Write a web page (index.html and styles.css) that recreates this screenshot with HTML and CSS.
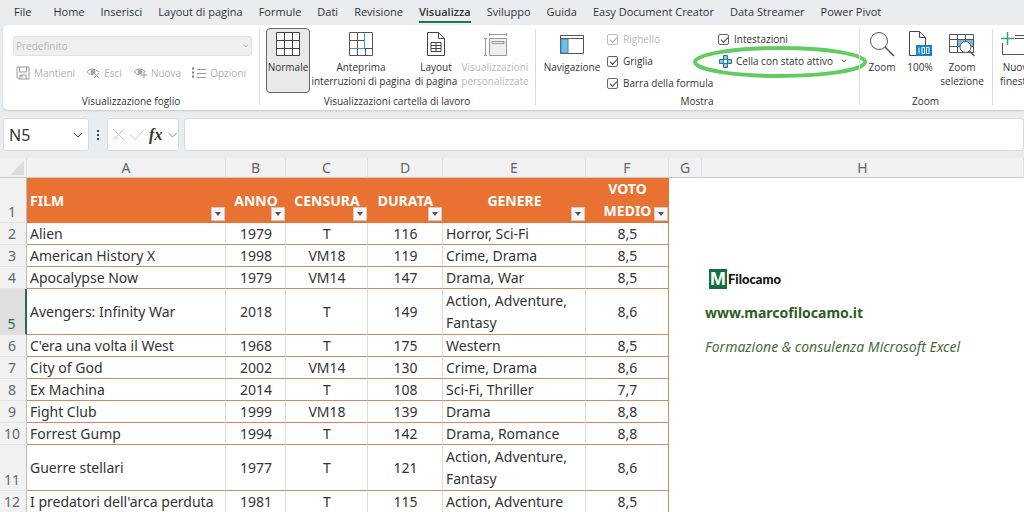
FILE: index.html
```html
<!DOCTYPE html>
<html lang="it">
<head>
<meta charset="utf-8">
<title>Film - Foglio di calcolo</title>
<link rel="stylesheet" href="styles.css">
</head>
<body>
<div class="app">
<nav class="tabs">
<button class="tab tab-file">File</button><button class="tab">Home</button><button class="tab">Inserisci</button><button class="tab">Layout di pagina</button><button class="tab">Formule</button><button class="tab">Dati</button><button class="tab">Revisione</button><button class="tab tab-active">Visualizza</button><button class="tab">Sviluppo</button><button class="tab">Guida</button><button class="tab">Easy Document Creator</button><button class="tab">Data Streamer</button><button class="tab">Power Pivot</button>
</nav>

<div class="ribbon">
<section class="group group-sheet">
  <div class="sheet-tools">
    <div class="select-wrap">
      <select class="view-select" aria-label="Visualizzazione foglio" disabled><option>Predefinito</option></select>
      <svg class="select-arrow" width="6" height="4" viewBox="0 0 6 4"><path d="M1 .7 3 2.8 5 .7" fill="none" stroke="#aaa"/></svg>
    </div>
    <div class="small-tools">
      <button class="small-tool" disabled><svg width="14" height="14" viewBox="0 0 14 14" fill="none" stroke="#999"><path d="M1 1h12v12H2.5L1 11.5zM3.5 1v5h7V1M4 13V9h6v4M6 9v3"/></svg>Mantieni</button>
      <button class="small-tool" disabled><svg width="14" height="12" viewBox="0 0 14 12" fill="none" stroke="#999"><path d="M1 5Q6-1 13 5M1 5q3 3 6 3"/><circle cx="7" cy="5" r="2" fill="#aaa"/><path d="m8 6 5 5M13 6l-5 5"/></svg>Esci</button>
      <button class="small-tool" disabled><svg width="14" height="12" viewBox="0 0 14 12" fill="none" stroke="#999"><path d="M1 5Q6-1 13 5M1 5q3 3 6 3"/><circle cx="7" cy="5" r="2" fill="#aaa"/><path d="M11 5v6M8 8h6"/></svg>Nuova</button>
      <button class="small-tool" disabled><svg width="14" height="12" viewBox="0 0 14 12" fill="none" stroke="#999"><path d="M5 2.500h9M5 6.500h9M5 10.500h9"/><path d="M0 1.500h3M0 5.500h3M0 9.500h3" stroke="#777" stroke-width="2" stroke-dasharray="2 1"/></svg>Opzioni</button>
    </div>
  </div>
  <h2 class="group-title">Visualizzazione foglio</h2>
</section>

<section class="group group-views">
  <div class="group-body">
    <button class="big-tool big-tool-on w-normal"><svg width="24" height="24" viewBox="0 0 24 24"><path d="M.5.5h23v23H.5zM8.500 0v24M16.500 0v24M0 8.500h24M0 16.500h24" fill="#fff" stroke="#444"/></svg>Normale</button>
    <button class="big-tool w-break"><svg width="24" height="24" viewBox="0 0 24 24" fill="none" stroke="#555"><path d="M.5.5h23v23H.5zM8.500 0v24M0 8.500h15M0 16.500h15M16 16.500h8M16.500 16v8"/><path d="M15.500 1v15M1 16.500h15" stroke="#2fa3d0"/></svg>Anteprima<br>interruzioni di pagina</button>
    <button class="big-tool w-layout"><svg width="20" height="24" viewBox="0 0 20 24" fill="none" stroke="#444"><path d="M1.500.5h11l6 6v17h-17zM12.500.5v6h6M5 10.500h10v9H5zM10 10v10M5 13.500h10M5 16.500h10"/></svg>Layout<br>di pagina</button>
    <button class="big-tool w-custom" disabled><svg width="24" height="24" viewBox="0 0 24 24" fill="none" stroke="#999"><path d="M6.500 6.500h17v17h-17z" fill="#eee"/><path d="M9 9.500h12v2H9zM6 2.500h18M6.500 1v3M23.500 1v3M2.500 6v18M1 6.500h3M1 23.500h3"/></svg>Visualizzazioni<br>personalizzate</button>
  </div>
  <h2 class="group-title">Visualizzazioni cartella di lavoro</h2>
</section>

<section class="group group-show">
  <div class="group-body">
    <button class="big-tool w-nav"><svg width="26" height="24" viewBox="0 0 26 24" fill="none" stroke="#555"><path d="M1.500 3.500h23v18h-23z" fill="#fff"/><path d="M2 7h7v14H2z" fill="#6fbdea" stroke="#3a86b5"/><path d="M1 6.500h24"/></svg>Navigazione</button>
    <div class="checks">
      <label class="check check-off"><input type="checkbox" checked disabled>Righello</label>
      <label class="check"><input type="checkbox" checked>Griglia</label>
      <label class="check"><input type="checkbox" checked>Barra della formula</label>
    </div>
    <div class="checks checks-right">
      <label class="check"><input type="checkbox" checked>Intestazioni</label>
      <button class="focus-cell">
        <svg width="13" height="13" viewBox="0 0 13 13"><path d="M4.500.5h4v4h4v4h-4v4h-4v-4h-4v-4h4z" fill="#8cc8ec" stroke="#23739d"/><path d="M4.500 4.500h4v4h-4z" fill="#fff" stroke="#23739d"/></svg>Cella con stato attivo
        <svg class="focus-arrow" width="6" height="4" viewBox="0 0 6 4"><path d="M1 .7 3 2.800 5 .7" fill="none" stroke="#333"/></svg>
        <svg class="ring" width="176" height="36" viewBox="0 0 176 36"><ellipse cx="88" cy="18" rx="85" ry="14" fill="none" stroke="#62cc62" stroke-width="4"/></svg>
      </button>
    </div>
  </div>
  <h2 class="group-title">Mostra</h2>
</section>

<section class="group group-zoom">
  <div class="group-body">
    <button class="big-tool w-zoom"><svg width="26" height="26" viewBox="0 0 26 26" fill="none" stroke="#555"><circle cx="10" cy="10" r="8.500"/><path d="m16 16 9 9" stroke-width="1.500"/></svg>Zoom</button>
    <button class="big-tool w-zoom"><svg width="24" height="26" viewBox="0 0 24 26"><path d="M1.500.5h10l6 6v18h-16zM11.500.5v6h6" fill="none" stroke="#444"/><path d="M8 14h16v11H8z" fill="#1684c7"/><path d="M11 16.500v6M14 16.500h2.500v6H14zM18.500 16.500H21v6h-2.500z" fill="none" stroke="#fff"/></svg>100%</button>
    <button class="big-tool w-zoomsel"><svg width="26" height="24" viewBox="0 0 26 24" fill="none" stroke="#555"><path d="M8 7h16v8H8z" fill="#75bce7" stroke="none"/><path d="M.5 2.500h24v18H.5zM8.500 2v18M16.500 2v18M0 7.500h25M0 14.500h25"/><circle cx="16.500" cy="15" r="5.500" fill="#fff"/><path d="m20.500 19 5 5" stroke-width="1.500"/></svg>Zoom<br>selezione</button>
  </div>
  <h2 class="group-title">Zoom</h2>
</section>

<section class="group group-window">
  <div class="group-body">
    <button class="big-tool"><svg width="34" height="24" viewBox="0 0 34 24" fill="none" stroke="#555"><path d="M1.500 11v11.500h31v-19H14M14 6.500h19"/><path d="M6.500 0v13M0 6.500h13" stroke="#3ba55d" stroke-width="1.500"/></svg>Nuova<br>finestra</button>
  </div>
</section>
</div>

<div class="formula-bar">
  <div class="name-box"><input class="name-input" aria-label="Casella nome" value="N5"><button class="plain" aria-label="Apri elenco nomi"><svg width="10" height="6" viewBox="0 0 10 6"><path d="m1 1 4 4 4-4" fill="none" stroke="#444"/></svg></button></div>
  <svg class="dots" width="2" height="10" viewBox="0 0 2 10" fill="#444"><path d="M0 0h2v2H0zM0 4h2v2H0zM0 8h2v2H0z"/></svg>
  <div class="fx-box">
    <button class="plain" aria-label="Annulla"><svg width="11" height="11" viewBox="0 0 11 11"><path d="m.5.5 10 10M10.500.5l-10 10" stroke="#c3c3c3"/></svg></button>
    <button class="plain" aria-label="Invio"><svg width="14" height="10" viewBox="0 0 14 10"><path d="m.5 5 4.500 4.500L13.500.5" fill="none" stroke="#c3c3c3"/></svg></button>
    <button class="plain fx">fx</button>
    <button class="plain" aria-label="Funzioni recenti"><svg width="9" height="6" viewBox="0 0 9 6"><path d="m.5 1 4 4 4-4" fill="none" stroke="#888"/></svg></button>
  </div>
  <input class="formula-input" aria-label="Barra della formula">
</div>

<table class="sheet">
<colgroup><col class="c-num"><col class="c-a"><col class="c-b"><col class="c-c"><col class="c-d"><col class="c-e"><col class="c-f"><col class="c-g"><col></colgroup>
<thead>
<tr class="letters"><th><svg class="corner" width="14" height="14" viewBox="0 0 14 14"><path d="M14 0v14H0z" fill="#dcdcdc"/></svg></th><th>A</th><th>B</th><th>C</th><th>D</th><th>E</th><th>F</th><th>G</th><th>H</th></tr>
</thead>
<tbody>
<tr class="fields"><th class="num">1</th>
<td class="left">FILM<button class="filter" aria-label="Filtra FILM"></button></td><td>ANNO<button class="filter" aria-label="Filtra ANNO"></button></td><td>CENSURA<button class="filter" aria-label="Filtra CENSURA"></button></td><td>DURATA<button class="filter" aria-label="Filtra DURATA"></button></td><td>GENERE<button class="filter" aria-label="Filtra GENERE"></button></td><td class="two-line">VOTO<br>MEDIO<button class="filter" aria-label="Filtra VOTO MEDIO"></button></td><td class="blank"></td><td class="blank"></td></tr>
<tr><th class="num">2</th><td class="left">Alien</td><td>1979</td><td>T</td><td>116</td><td class="left">Horror, Sci-Fi</td><td>8,5</td><td class="blank"></td><td class="blank"></td></tr>
<tr><th class="num">3</th><td class="left">American History X</td><td>1998</td><td>VM18</td><td>119</td><td class="left">Crime, Drama</td><td>8,5</td><td class="blank"></td><td class="blank"></td></tr>
<tr><th class="num">4</th><td class="left">Apocalypse Now</td><td>1979</td><td>VM14</td><td>147</td><td class="left">Drama, War</td><td>8,5</td><td class="blank"></td><td class="blank"><div class="logo"><span class="logo-mark">M</span><span>Filocamo</span></div></td></tr>
<tr class="tall"><th class="num num-active">5</th><td class="left">Avengers: Infinity War</td><td>2018</td><td>T</td><td>149</td><td class="left">Action, Adventure, Fantasy</td><td>8,6</td><td class="blank"></td><td class="blank"><a class="site" href="#">www.marcofilocamo.it</a></td></tr>
<tr><th class="num">6</th><td class="left">C'era una volta il West</td><td>1968</td><td>T</td><td>175</td><td class="left">Western</td><td>8,5</td><td class="blank"></td><td class="blank motto">Formazione &amp; consulenza Microsoft Excel</td></tr>
<tr><th class="num">7</th><td class="left">City of God</td><td>2002</td><td>VM14</td><td>130</td><td class="left">Crime, Drama</td><td>8,6</td><td class="blank"></td><td class="blank"></td></tr>
<tr><th class="num">8</th><td class="left">Ex Machina</td><td>2014</td><td>T</td><td>108</td><td class="left">Sci-Fi, Thriller</td><td>7,7</td><td class="blank"></td><td class="blank"></td></tr>
<tr><th class="num">9</th><td class="left">Fight Club</td><td>1999</td><td>VM18</td><td>139</td><td class="left">Drama</td><td>8,8</td><td class="blank"></td><td class="blank"></td></tr>
<tr><th class="num">10</th><td class="left">Forrest Gump</td><td>1994</td><td>T</td><td>142</td><td class="left">Drama, Romance</td><td>8,8</td><td class="blank"></td><td class="blank"></td></tr>
<tr class="tall"><th class="num">11</th><td class="left">Guerre stellari</td><td>1977</td><td>T</td><td>121</td><td class="left">Action, Adventure, Fantasy</td><td>8,6</td><td class="blank"></td><td class="blank"></td></tr>
<tr><th class="num">12</th><td class="left">I predatori dell'arca perduta</td><td>1981</td><td>T</td><td>115</td><td class="left">Action, Adventure</td><td>8,5</td><td class="blank"></td><td class="blank"></td></tr>
</tbody>
</table>
</div>
</body>
</html>
```
FILE: styles.css
```css
* { box-sizing: border-box; }
body { margin: 0; font-family: "Noto Sans", "Open Sans", sans-serif; font-size: 11px; color: #333; background: #fff; }
button, input, select { font: inherit; color: inherit; margin: 0; padding: 0; border: 0; background: none; }
svg { flex: none; display: block; }
.app { height: 100vh; overflow: hidden; background: #e9edf0; }

/* Tabs */
.tabs { display: flex; gap: 16px; height: 25px; padding: 3px 14px 0; overflow: hidden; font-family: "Open Sans", sans-serif; }
.tab { height: 20px; flex: none; line-height: 18px; border-bottom: 2px solid transparent; white-space: nowrap; }
.tab-file { margin-right: 6px; }
.tab-active { font-weight: 600; border-bottom-color: #1d7a48; }

/* Ribbon */
.ribbon { display: flex; height: 85px; margin-left: 3px; background: #fff; border-radius: 5px 0 0 5px; box-shadow: 0 1px 2px #c3c9cd; overflow: hidden; font-family: "Open Sans", sans-serif; font-size: 10px; }
.group { position: relative; flex: none; display: flex; flex-direction: column; padding-top: 3px; }
.group + .group::before { content: ""; position: absolute; left: 0; top: 4px; bottom: 5px; width: 1px; background: #dcdcdc; }
.group-sheet { width: 256px; }
.group-views { width: 276px; }
.group-show { width: 324px; }
.group-zoom { width: 133px; }
.group-window { flex: 1 0 0; min-width: 0; }
.group-body { flex: 1; display: flex; padding-left: 7px; }
.group-title { margin: 0; height: 16px; font-size: 10px; line-height: 14px; font-weight: 400; text-align: center; }

.sheet-tools { flex: 1; padding: 8px 7px 0 10px; }
.select-wrap { position: relative; }
.view-select { appearance: none; width: 100%; height: 20px; padding: 0 2px; background: #efefef; border: 1px solid #e2e2e2; border-radius: 3px; color: #b5b5b5; opacity: 1; }
.select-arrow { position: absolute; right: 3px; top: 8px; }
.small-tools { display: flex; justify-content: space-between; padding: 9px 6px 0 3px; }
.small-tool { display: flex; align-items: center; gap: 4px; height: 16px; color: #b0b0b0; }

.big-tool { display: flex; flex-direction: column; align-items: center; flex: none; height: 65px; padding-top: 2px; line-height: 14px; border: 1px solid transparent; border-radius: 4px; white-space: nowrap; }
.big-tool svg { height: 26px; margin-bottom: 3px; }
.big-tool-on { background: #e9e9e9; border-color: #666; }
.big-tool:disabled { color: #b8b8b8; }
.w-normal { width: 44px; }
.w-break { width: 102px; }
.w-layout { width: 48px; }
.w-custom { width: 70px; }
.w-nav { width: 60px; }
.w-zoom { width: 38px; }
.w-zoomsel { width: 46px; }
.group-zoom .group-body { padding-left: 4px; }

.checks { display: flex; flex-direction: column; padding-left: 5px; width: 116px; }
.checks-right { width: 136px; padding-left: 0; }
.check { display: flex; align-items: center; gap: 5px; height: 22px; white-space: nowrap; }
.check input { appearance: none; position: relative; flex: none; width: 11px; height: 11px; border: 1px solid #666; border-radius: 2px; }
.check input::before { content: ""; position: absolute; left: 2px; top: 2px; width: 6px; height: 3px; border: solid #444; border-width: 0 0 1px 1px; transform: rotate(-45deg); }
.check-off { color: #b8b8b8; }
.check-off input { border-color: #bbb; }
.check-off input::before { border-color: #aaa; }
.focus-cell { position: relative; display: flex; align-items: center; gap: 4px; height: 22px; padding-left: 1px; white-space: nowrap; }
.focus-arrow { margin-left: 4px; }
.focus-cell .ring { position: absolute; left: -26px; top: -6px; pointer-events: none; }

/* Formula bar */
.formula-bar { display: flex; align-items: center; height: 48px; padding: 8px 0 7px 3px; }
.name-box, .fx-box, .formula-input { height: 33px; background: #fff; border: 1px solid #d8dcdf; border-radius: 3px; }
.name-box { display: flex; align-items: center; width: 86px; padding: 0 5px; }
.name-input { flex: 1; min-width: 0; font-size: 16px; }
.dots { margin: 0 8px; }
.fx-box { display: flex; align-items: center; justify-content: space-between; width: 72px; padding: 0 1px 0 5px; }
.fx { font: italic bold 16px "Liberation Serif", serif; }
.formula-input { flex: 1; min-width: 0; margin-left: 5px; padding: 0 6px; font-size: 14px; }

/* Sheet */
.sheet { width: 100%; table-layout: fixed; border-collapse: separate; border-spacing: 0; background: #fff; font-size: 14px; line-height: 22px; color: #333; }
.c-num { width: 27px; }
.c-a { width: 199px; }
.c-b { width: 60px; }
.c-c { width: 82px; }
.c-d { width: 75px; }
.c-e { width: 143px; }
.c-f { width: 83px; }
.c-g { width: 33px; }
.letters th { height: 20px; padding: 0; background: #f1f1f1; border-right: 1px solid #dedede; border-bottom: 1px solid #c8c8c8; font-weight: 400; line-height: 19px; color: #666; }
.corner { margin-left: 10px; }
.num { padding: 0 2px 0 0; background: #f1f1f1; border-right: 1px solid #bdbdbd; border-bottom: 1px solid #e2e2e2; font-weight: 400; color: #666; vertical-align: bottom; line-height: 21px; }
.num-active { background: #dfdfdf; color: #217346; border-right: 2px solid #217346; }
.sheet td { height: 22px; padding: 1px 3px 0 4px; border-right: 1px solid #e0dcd8; border-bottom: 1px solid #cf8a5e; text-align: center; line-height: 20px; }
.sheet td:nth-child(7) { border-right-color: #cf8a5e; }
.sheet .left { padding-left: 3px; text-align: left; }
.sheet .blank { padding-left: 3px; border: 0; background: #fff; text-align: left; white-space: nowrap; }
.sheet .tall td { height: 46px; line-height: 22px; }
.sheet .fields td { position: relative; height: 45px; background: #e97132; border-color: #e97132; color: #fff; font-weight: 700; }
.sheet .fields .blank { background: #fff; }
.sheet .fields .two-line { padding-top: 0; line-height: 22px; }
.filter { position: absolute; right: 0; bottom: 1px; width: 14px; height: 14px; background: #f7f7f7; border: 1px solid #ccc; }
.filter::before { content: ""; position: absolute; left: 3px; top: 4px; border: 3px solid transparent; border-top: 4px solid #555; border-bottom: 0; }
.logo { display: flex; align-items: center; gap: 1px; height: 20px; padding-left: 4px; font: 900 13px "Lato", sans-serif; color: #111; }
.logo-mark { width: 18px; height: 20px; background: #12703f; color: #fff; font: 700 19px/20px "Liberation Sans", sans-serif; text-align: center; }
.site { font-weight: 700; color: #2f5d26; text-decoration: none; }
.sheet .motto { font-style: italic; color: #476b3d; }
```
